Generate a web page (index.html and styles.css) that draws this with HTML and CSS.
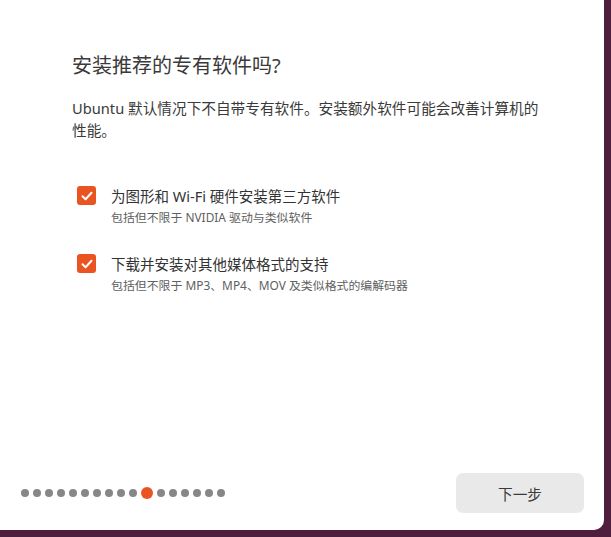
FILE: index.html
```html
<!DOCTYPE html>
<html lang="zh-CN">
<head>
    <meta charset="UTF-8">
    <title>安装推荐的专有软件</title>
    <link rel="stylesheet" href="styles.css">
</head>
<body>
    <div class="window">
        <div class="content">
            <h1 class="title">安装推荐的专有软件吗?</h1>
            <p class="intro">Ubuntu 默认情况下不自带专有软件。安装额外软件可能会改善计算机的性能。</p>
            <ul class="options">
                <li class="option">
                    <span class="check"><svg width="14" height="14" viewBox="0 0 14 14"><path d="M2.5 7.2 L5.6 10.2 L11.5 3.8" fill="none" stroke="#fff" stroke-width="2" stroke-linecap="round" stroke-linejoin="round"/></svg></span>
                    <div class="text">
                        <div class="label">为图形和 Wi-Fi 硬件安装第三方软件</div>
                        <div class="hint">包括但不限于 NVIDIA 驱动与类似软件</div>
                    </div>
                </li>
                <li class="option">
                    <span class="check"><svg width="14" height="14" viewBox="0 0 14 14"><path d="M2.5 7.2 L5.6 10.2 L11.5 3.8" fill="none" stroke="#fff" stroke-width="2" stroke-linecap="round" stroke-linejoin="round"/></svg></span>
                    <div class="text">
                        <div class="label">下载并安装对其他媒体格式的支持</div>
                        <div class="hint">包括但不限于 MP3、MP4、MOV 及类似格式的编解码器</div>
                    </div>
                </li>
            </ul>
        </div>
        <div class="footer">
            <div class="dots">
                <span class="dot"></span><span class="dot"></span><span class="dot"></span><span class="dot"></span><span class="dot"></span>
                <span class="dot"></span><span class="dot"></span><span class="dot"></span><span class="dot"></span><span class="dot"></span>
                <span class="dot current"></span>
                <span class="dot"></span><span class="dot"></span><span class="dot"></span><span class="dot"></span><span class="dot"></span><span class="dot"></span>
            </div>
            <button class="next">下一步</button>
        </div>
    </div>
</body>
</html>
```

FILE: styles.css
```css
html,body{margin:0;padding:0;}
body{width:611px;height:537px;background:#4f1e3f;font-family:"Noto Sans","Noto Sans CJK SC",sans-serif;color:#333;overflow:hidden;}
ul{list-style:none;padding:0;margin:0;}

.window{width:604px;height:530px;background:#fff;border-bottom-right-radius:10px;display:flex;flex-direction:column;}
.content{flex:1;padding:52px 50px 0 72px;}

.title{margin:0;font-size:20px;font-weight:400;line-height:28px;color:#3a3a3a;}
.intro{margin:17px 0 0;max-width:474px;font-size:14.67px;line-height:22px;color:#3a3a3a;}

.options{margin-top:44px;display:flex;flex-direction:column;gap:26px;}
.option{display:flex;gap:15px;align-items:flex-start;padding-left:5px;}
.check{flex:none;width:19px;height:19px;margin-top:1px;border-radius:3px;background:#e95420;display:flex;align-items:center;justify-content:center;}
.label{font-size:14.5px;line-height:22px;color:#333;}
.hint{font-size:11.9px;line-height:20px;color:#606060;}

.footer{display:flex;align-items:center;justify-content:space-between;padding:0 20px 17px 21px;}
.dots{display:flex;align-items:center;gap:4px;}
.dot{width:8px;height:8px;border-radius:50%;background:#878787;}
.dot.current{width:12px;height:12px;background:#e95420;}

.next{width:128px;height:40px;border:none;border-radius:7px;background:#e9e9e9;font-family:inherit;font-size:14.67px;color:#3a3a3a;}
```
